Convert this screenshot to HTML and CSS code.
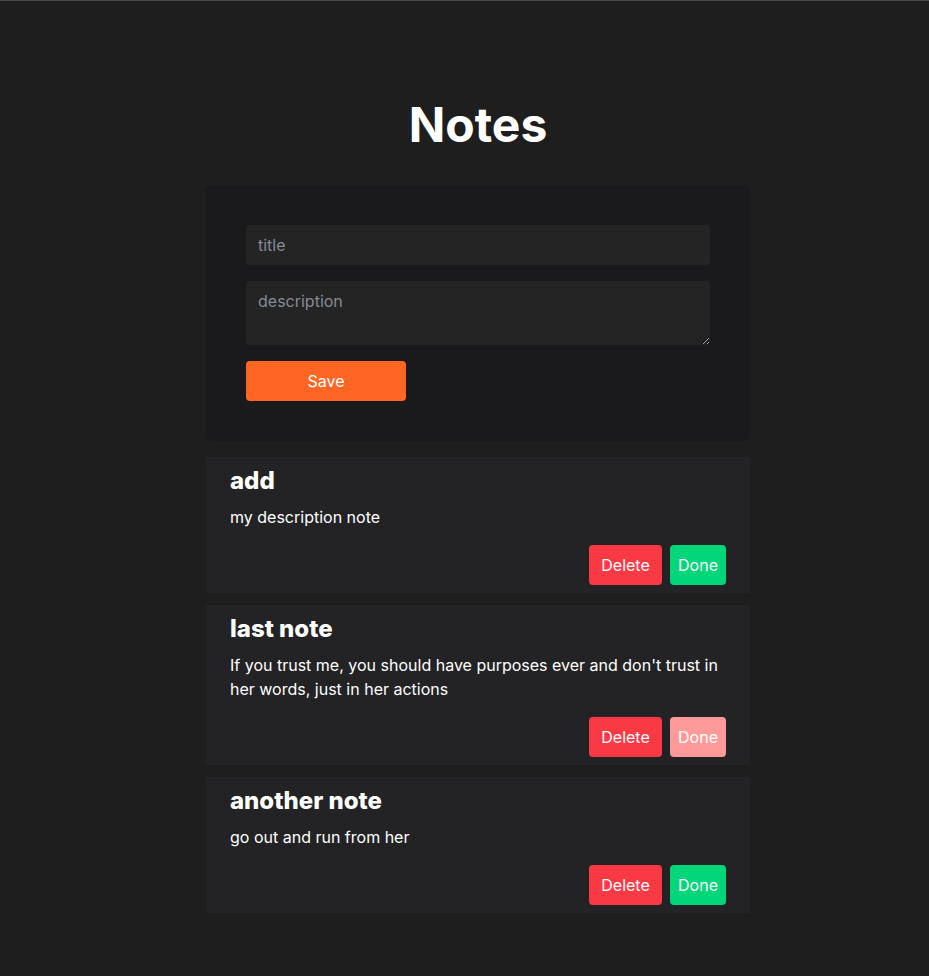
FILE: index.html
```html
<!DOCTYPE html>
<html lang="en">
<head>
<meta charset="utf-8">
<title>Notes</title>
<link rel="stylesheet" href="styles.css">
</head>
<body>
<main class="app">
  <h1 class="app-title">Notes</h1>
  <form class="note-form">
    <input class="field" type="text" placeholder="title">
    <textarea class="field field-area" placeholder="description"></textarea>
    <button class="btn btn-save" type="button">Save</button>
  </form>
  <section class="note-list">
    <article class="note">
      <h2 class="note-title">add</h2>
      <p class="note-desc">my description note</p>
      <div class="note-actions">
        <button class="btn btn-delete" type="button">Delete</button>
        <button class="btn btn-done" type="button">Done</button>
      </div>
    </article>
    <article class="note">
      <h2 class="note-title">last note</h2>
      <p class="note-desc">If you trust me, you should have purposes ever and don't trust in her words, just in her actions</p>
      <div class="note-actions">
        <button class="btn btn-delete" type="button">Delete</button>
        <button class="btn btn-done is-done" type="button">Done</button>
      </div>
    </article>
    <article class="note">
      <h2 class="note-title">another note</h2>
      <p class="note-desc">go out and run from her</p>
      <div class="note-actions">
        <button class="btn btn-delete" type="button">Delete</button>
        <button class="btn btn-done" type="button">Done</button>
      </div>
    </article>
  </section>
</main>
</body>
</html>
```

FILE: styles.css
```css
* { box-sizing: border-box; }

html, body {
  margin: 0;
  background: #1e1e1e;
}

body {
  border-top: 1px solid #4a4a4c;
  min-height: 976px;
  padding: 95px 0 0 27px;
  font-family: Inter, "Liberation Sans", sans-serif;
  color: #ffffff;
}

.app {
  width: 544px;
  margin: 0 auto;
}

.app-title {
  margin: 0 0 31px;
  font-size: 48px;
  line-height: 58px;
  font-weight: 700;
  text-align: center;
}

.note-form {
  display: flex;
  flex-direction: column;
  gap: 16px;
  padding: 40px;
  background: #1a1a1c;
  border-radius: 6px;
}

.field {
  display: block;
  width: 100%;
  height: 40px;
  padding: 0 12px;
  border: none;
  border-radius: 4px;
  background: #242424;
  color: #ffffff;
  font-family: inherit;
  font-size: 16px;
  outline: none;
}

.field::placeholder { color: #868a94; }

.field-area {
  height: 64px;
  padding: 10px 12px;
  line-height: 20px;
  resize: vertical;
}

.btn {
  height: 40px;
  border: none;
  border-radius: 4px;
  color: #ffffff;
  font-family: inherit;
  font-size: 16px;
  font-weight: 400;
  cursor: pointer;
}

.btn-save {
  width: 160px;
  background: #ff6624;
}

.note-list {
  display: flex;
  flex-direction: column;
  gap: 12px;
  margin-top: 16px;
}

.note {
  padding: 8px 24px 8px;
  background: #232325;
}

.note-title {
  margin: 0;
  font-size: 24px;
  line-height: 32px;
  font-weight: 800;
}

.note-desc {
  margin: 8px 0 0;
  font-size: 16px;
  line-height: 24px;
}

.note-actions {
  display: flex;
  justify-content: flex-end;
  gap: 8px;
  margin-top: 16px;
}

.btn-delete {
  width: 73px;
  padding: 0;
  background: #f93a45;
}

.btn-done {
  width: 56px;
  padding: 0;
  background: #01d67b;
}

.btn-done.is-done {
  background: #fe9a9a;
}
```
